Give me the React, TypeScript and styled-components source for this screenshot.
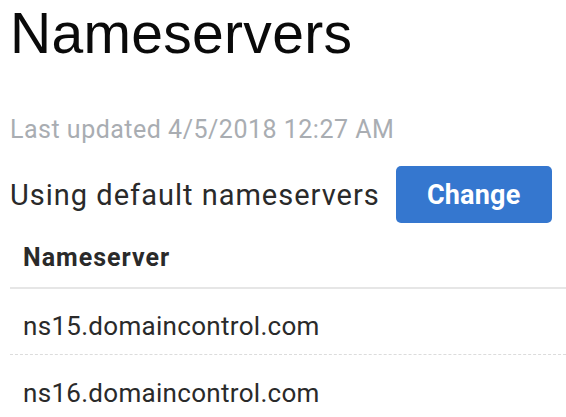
import React from "react";
import styled, { createGlobalStyle } from "styled-components";

const Global = createGlobalStyle`
  html, body { margin: 0; padding: 0; background: #fff; }
  body { overflow: hidden; font-family: Roboto, "Noto Sans", sans-serif; }
`;

const Page = styled.div`
  padding: 0 0 0 10px;
  width: 556px;
`;

const Title = styled.h1`
  margin: 0;
  font-family: "Liberation Sans", Arial, sans-serif;
  font-weight: 400;
  font-size: 57px;
  line-height: 66px;
  color: #0a0a0a;
  letter-spacing: 0.3px;
`;

const Updated = styled.div`
  margin-top: 49px;
  font-size: 25px;
  line-height: 30px;
  letter-spacing: 0.5px;
  color: #a9adb2;
`;

const StatusRow = styled.div`
  display: flex;
  align-items: center;
  gap: 16px;
  margin-top: 21px;
`;

const StatusText = styled.span`
  font-size: 29px;
  letter-spacing: 1px;
  color: #2a2a2a;
`;

const Button = styled.button`
  width: 156px;
  height: 57px;
  border: none;
  border-radius: 5px;
  background: #3577cf;
  color: #fff;
  font-family: Roboto, sans-serif;
  font-weight: 700;
  font-size: 27px;
  letter-spacing: 0.2px;
  padding: 0;
`;

const Table = styled.div`
  display: flex;
  flex-direction: column;
`;

const Row = styled.div<{ $variant: "head" | "dashed" | "none" }>`
  height: 66px;
  display: flex;
  align-items: flex-end;
  padding: 0 0 0 13px;
  box-sizing: border-box;
  border-bottom: ${(p) =>
    p.$variant === "head"
      ? "2px solid #e6e6e6"
      : p.$variant === "dashed"
      ? "1px dashed #dcdcdc"
      : "none"};
  font-size: ${(p) => (p.$variant === "head" ? "25px" : "26px")};
  letter-spacing: ${(p) => (p.$variant === "head" ? "1px" : "0.3px")};
  font-weight: ${(p) => (p.$variant === "head" ? 700 : 400)};
  color: #2a2a2a;
`;

const Cell = styled.span<{ $pb: number }>`
  padding-bottom: ${(p) => p.$pb}px;
  line-height: 30px;
`;

export default function App() {
  return (
    <>
      <Global />
      <Page>
        <Title>Nameservers</Title>
        <Updated>Last updated 4/5/2018 12:27 AM</Updated>
        <StatusRow>
          <StatusText>Using default nameservers</StatusText>
          <Button>Change</Button>
        </StatusRow>
        <Table>
          <Row $variant="head">
            <Cell $pb={14}>Nameserver</Cell>
          </Row>
          <Row $variant="dashed">
            <Cell $pb={13}>ns15.domaincontrol.com</Cell>
          </Row>
          <Row $variant="none">
            <Cell $pb={13}>ns16.domaincontrol.com</Cell>
          </Row>
        </Table>
      </Page>
    </>
  );
}
